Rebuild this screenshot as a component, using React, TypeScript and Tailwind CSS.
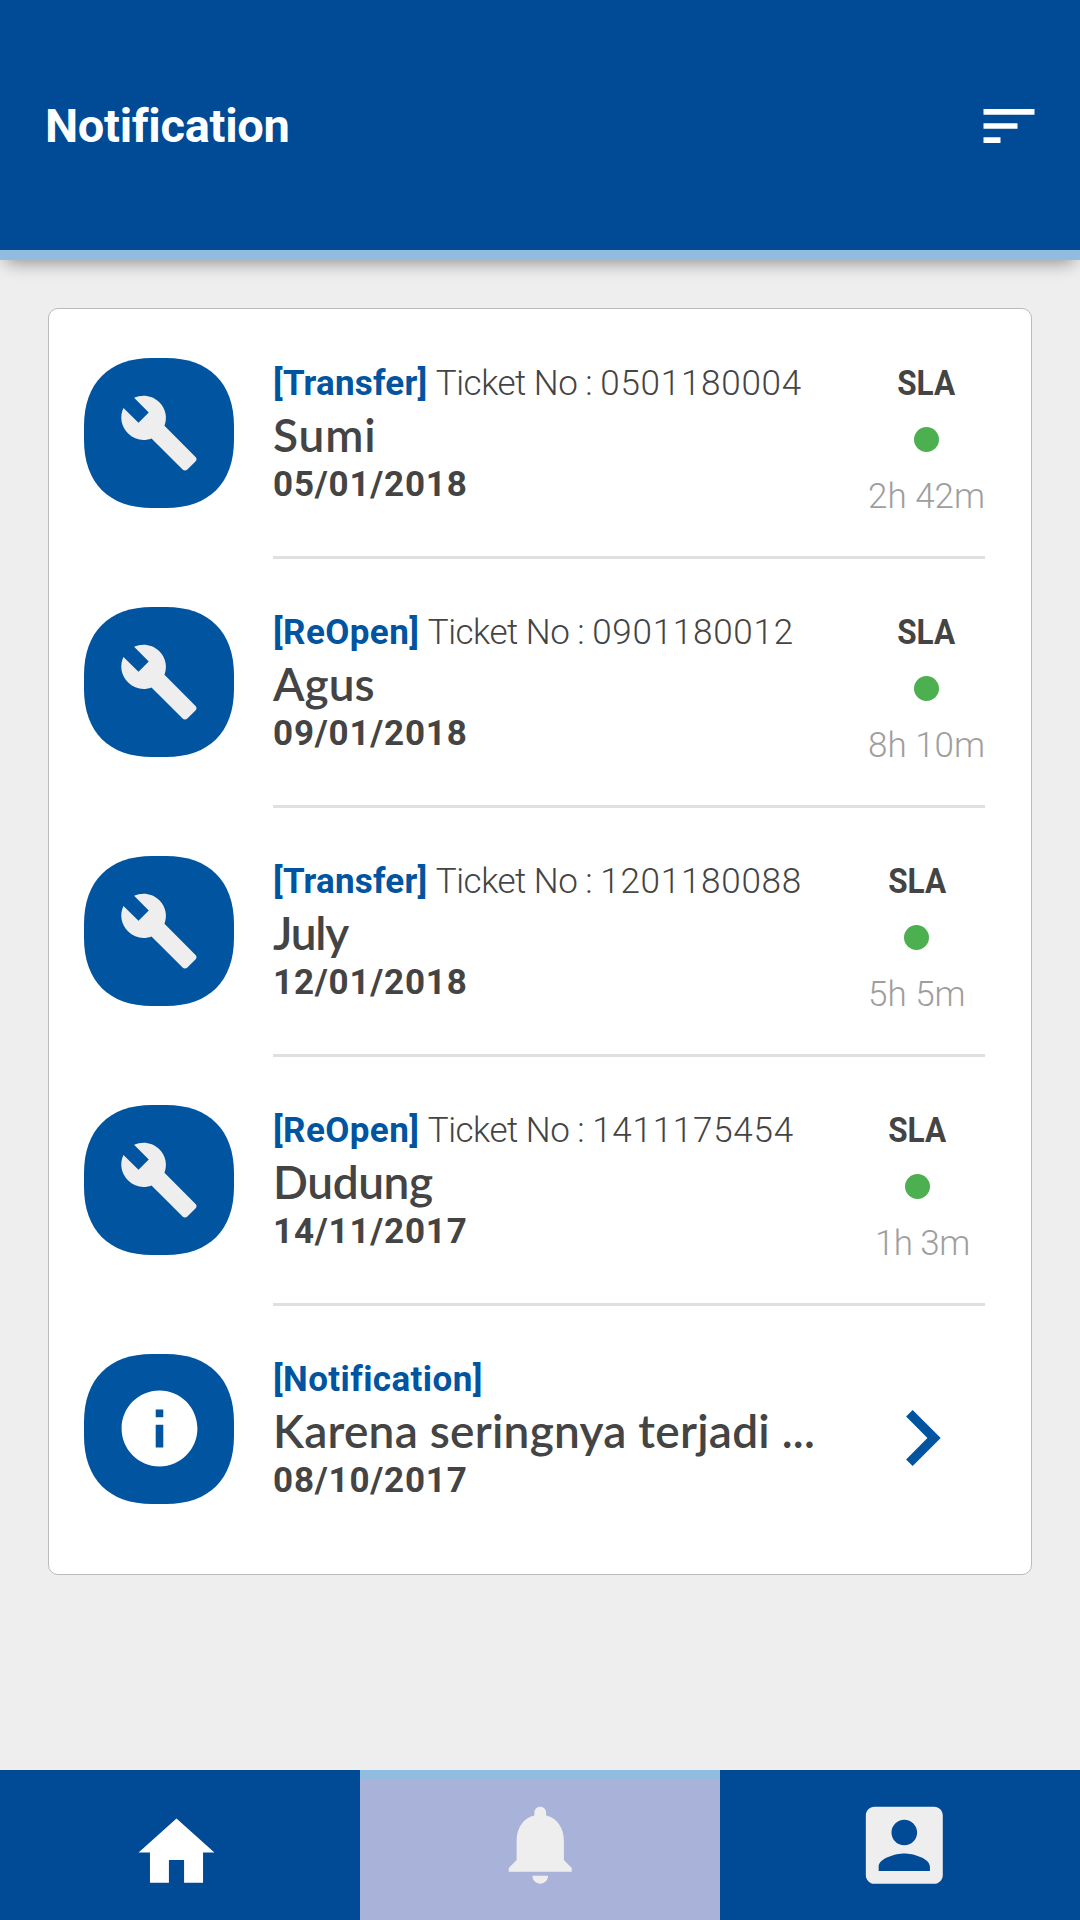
import type { ReactNode } from 'react';

type Ticket = {
  tag: string;
  tagTracking: string;
  ticketNo?: string;
  title: string;
  titleTracking: string;
  date: string;
  sla?: string;
  slaClass?: string;
};

const items: Ticket[] = [
  { tag: '[Transfer]', tagTracking: 'tracking-[0.2px]', ticketNo: '0501180004', title: 'Sumi', titleTracking: 'tracking-[0.9px]', date: '05/01/2018', sla: '2h 42m' },
  { tag: '[ReOpen]', tagTracking: 'tracking-[0.4px]', ticketNo: '0901180012', title: 'Agus', titleTracking: 'tracking-[0px]', date: '09/01/2018', sla: '8h 10m' },
  { tag: '[Transfer]', tagTracking: 'tracking-[0.2px]', ticketNo: '1201180088', title: 'July', titleTracking: 'tracking-[-1.2px]', date: '12/01/2018', sla: '5h 5m' },
  { tag: '[ReOpen]', tagTracking: 'tracking-[0.4px]', ticketNo: '1411175454', title: 'Dudung', titleTracking: 'tracking-[-0.4px]', date: '14/11/2017', sla: '1h 3m', slaClass: 'pl-[7px] -mr-[3px] tracking-[-0.6px]' },
  { tag: '[Notification]', tagTracking: 'tracking-[0.4px]', title: 'Karena seringnya terjadi ...', titleTracking: 'tracking-[0.25px]', date: '08/10/2017' },
];

function Icon({ d, className }: { d: string; className: string }) {
  return (
    <svg viewBox="0 0 24 24" fill="currentColor" className={className}>
      <path d={d} />
    </svg>
  );
}

const paths = {
  sort: 'M3 18h6v-2H3v2zM3 6v2h18V6H3zm0 7h12v-2H3v2z',
  build: 'M22.7 19l-9.1-9.1c.9-2.3.4-5-1.5-6.9-2-2-5-2.4-7.4-1.3L9 6 6 9 1.6 4.7C.4 7.1.9 10.1 2.9 12.1c1.9 1.9 4.6 2.4 6.9 1.5l9.1 9.1c.4.4 1 .4 1.4 0l2.3-2.3c.5-.4.5-1.1.1-1.4z',
  info: 'M12 2C6.48 2 2 6.48 2 12s4.48 10 10 10 10-4.48 10-10S17.52 2 12 2zm1 15h-2v-6h2v6zm0-8h-2V7h2v2z',
  chevron: 'M10 6L8.59 7.41 13.17 12l-4.58 4.59L10 18l6-6z',
  home: 'M10 20v-6h4v6h5v-8h3L12 3 2 12h3v8z',
  bell: 'M12 22c1.1 0 2-.9 2-2h-4c0 1.1.89 2 2 2zm6-6v-5c0-3.07-1.64-5.64-4.5-6.32V4c0-.83-.67-1.5-1.5-1.5s-1.5.67-1.5 1.5v.68C7.63 5.36 6 7.92 6 11v5l-2 2v1h16v-1l-2-2z',
  account: 'M3 5v14c0 1.1.89 2 2 2h14c1.1 0 2-.9 2-2V5c0-1.1-.9-2-2-2H5c-1.11 0-2 .9-2 2zm12 4c0 1.66-1.34 3-3 3s-3-1.34-3-3 1.34-3 3-3 3 1.34 3 3zm-9 8c0-2 4-3.1 6-3.1s6 1.1 6 3.1v1H6v-1z',
};

function Badge({ children }: { children: ReactNode }) {
  return (
    <div className="grid size-[150px] shrink-0 place-items-center">
      <svg viewBox="0 0 150 150" className="col-start-1 row-start-1 size-[150px] text-[#0054a0]" fill="currentColor">
        <path d="M0 68C0 25 25 0 68 0h14c43 0 68 25 68 68v14c0 43-25 68-68 68H68C25 150 0 125 0 82z" />
      </svg>
      {children}
    </div>
  );
}

function Row({ item, last }: { item: Ticket; last: boolean }) {
  return (
    <div className="flex h-[249px] pl-[35px] pr-[46px]">
      <div className="pt-12">
        <Badge>
          {item.sla ? (
            <Icon d={paths.build} className="col-start-1 row-start-1 mb-px size-[82px] text-[#eeeeee]" />
          ) : (
            <Icon d={paths.info} className="col-start-1 row-start-1 mb-px size-[91px] text-white" />
          )}
        </Badge>
      </div>
      <div className={`ml-[39px] flex flex-1 pt-[54px] ${last ? '' : 'border-b-[3px] border-[#e0e0e0]'}`}>
        <div className="w-[595px] shrink-0 whitespace-nowrap text-[#444444]">
          <div className="flex text-[35px] leading-10">
            <span className={`font-bold text-[#0054a0] ${item.tagTracking}`}>{item.tag}</span>
            {item.ticketNo && (
              <span className="ml-[8.5px] font-light">
                <span className="tracking-[-0.5px]">Ticket No : </span>
                <span className="tracking-[0.75px]">{item.ticketNo}</span>
              </span>
            )}
          </div>
          <div className={`mt-1.5 font-['Lato',sans-serif] text-[46px] font-semibold leading-[50px] ${item.titleTracking}`}>{item.title}</div>
          <div className="mt-[5px] text-[35px] font-bold leading-10 tracking-[0.8px]">{item.date}</div>
        </div>
        {item.sla ? (
          <div className="flex flex-col items-center whitespace-nowrap text-[35px] leading-10">
            <span className="scale-x-[0.9] font-bold text-[#444444]">SLA</span>
            <span className="mt-[23px] size-[25px] rounded-full bg-[#4caf50]" />
            <span className={`mt-[25px] font-light text-[#9e9e9e] ${item.slaClass ?? ''}`}>{item.sla}</span>
          </div>
        ) : (
          <Icon d={paths.chevron} className="-ml-0.5 mt-[22px] size-28 shrink-0 text-[#0054a0]" />
        )}
      </div>
    </div>
  );
}

export default function App() {
  return (
    <div className="flex h-[1920px] w-[1080px] flex-col bg-[#eeeeee] font-['Roboto',sans-serif]">
      <header className="flex h-[260px] items-center justify-between border-b-[10px] border-[#90bddf] bg-[#004a96] pl-[45px] pr-[37.5px] text-white shadow-[0_9px_16px_-6px_rgba(0,0,0,0.38)]">
        <h1 className="pt-px text-[47px] font-bold leading-[56px] tracking-[-0.3px]">Notification</h1>
        <Icon d={paths.sort} className="mt-px size-[68px]" />
      </header>

      <main className="flex-1 px-12 pt-12">
        <section className="h-[1267px] rounded-[10px] border border-[#bbbbbb] bg-white pt-px">
          {items.map((item, i) => (
            <Row key={item.date} item={item} last={i === items.length - 1} />
          ))}
        </section>
      </main>

      <nav className="grid h-[150px] grid-cols-3 bg-[#004a96]">
        <button className="flex justify-center pr-[7px] pt-[37px] text-white">
          <Icon d={paths.home} className="size-[91px]" />
        </button>
        <button className="flex justify-center border-t-[10px] border-[#90bddf] bg-[#a9b2d8] pl-px pt-[17px] text-[#eeeeee]">
          <Icon d={paths.bell} className="size-[94.5px]" />
        </button>
        <button className="flex justify-center pl-[9px] pt-6 text-[#eeeeee]">
          <Icon d={paths.account} className="size-[102.6px]" />
        </button>
      </nav>
    </div>
  );
}
